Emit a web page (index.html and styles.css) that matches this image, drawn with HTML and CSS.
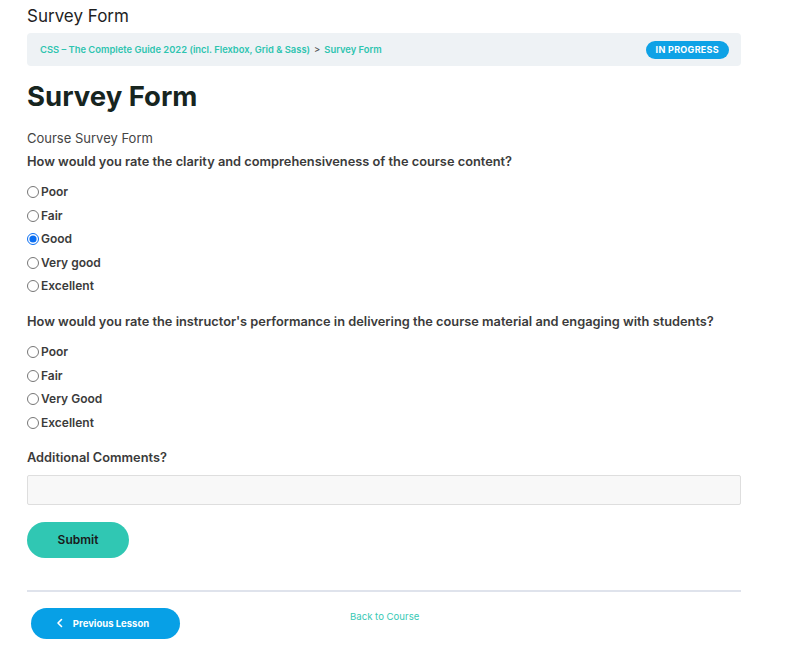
FILE: index.html
```html
<!DOCTYPE html>
<html>
<head>
<meta charset="utf-8">
<link rel="stylesheet" href="styles.css">
</head>
<body>
<div class="page">
  <div class="top-title">Survey Form</div>
  <div class="crumbs">
    <div class="crumb-links"><a class="crumb">CSS – The Complete Guide 2022 (incl. Flexbox, Grid &amp; Sass)</a><span class="sep">&gt;</span><a class="crumb">Survey Form</a></div>
    <span class="badge">IN PROGRESS</span>
  </div>
  <h1 class="title">Survey Form</h1>
  <form class="form">
    <div class="form-name">Course Survey Form</div>
    <div class="question">How would you rate the clarity and comprehensiveness of the course content?</div>
    <div class="options">
      <label class="opt"><input type="radio" name="q1"><span>Poor</span></label>
      <label class="opt"><input type="radio" name="q1"><span>Fair</span></label>
      <label class="opt"><input type="radio" name="q1" checked><span>Good</span></label>
      <label class="opt"><input type="radio" name="q1"><span>Very good</span></label>
      <label class="opt"><input type="radio" name="q1"><span>Excellent</span></label>
    </div>
    <div class="question">How would you rate the instructor's performance in delivering the course material and engaging with students?</div>
    <div class="options last">
      <label class="opt"><input type="radio" name="q2"><span>Poor</span></label>
      <label class="opt"><input type="radio" name="q2"><span>Fair</span></label>
      <label class="opt"><input type="radio" name="q2"><span>Very Good</span></label>
      <label class="opt"><input type="radio" name="q2"><span>Excellent</span></label>
    </div>
    <div class="question comments-label">Additional Comments?</div>
    <textarea class="comments"></textarea>
    <button type="button" class="submit">Submit</button>
  </form>
  <hr class="divider">
  <div class="nav">
    <button type="button" class="prev"><svg width="8" height="10" viewBox="0 0 8 10"><path d="M5.5 1.5 L2 5 L5.5 8.5" fill="none" stroke="#fff" stroke-width="1.6" stroke-linecap="round" stroke-linejoin="round"/></svg><span>Previous Lesson</span></button>
    <a class="back">Back to Course</a>
  </div>
</div>
</body>
</html>
```
FILE: styles.css
```css
* { box-sizing: border-box; }
body {
  margin: 0;
  font-family: Inter, "Noto Sans", sans-serif;
  background: #fff;
  color: #333;
}
.page {
  width: 714px;
  margin-left: 27px;
  padding-top: 5px;
}
.top-title {
  font-size: 17px;
  line-height: 22px;
  color: #1f1f1f;
}
.crumbs {
  margin-top: 6px;
  height: 33px;
  background: #eef2f5;
  border-radius: 4px;
  display: flex;
  align-items: center;
  justify-content: space-between;
  padding: 0 12px 0 13px;
}
.crumb-links {
  font-size: 9.4px;
  font-weight: 600;
  color: #2ec4b0;
}
.crumb { color: #2ec4b0; }
.sep { color: #555; margin: 0 4px; font-weight: 500; }
.badge {
  background: #0ea2e6;
  color: #fff;
  font-size: 9px;
  font-weight: 700;
  letter-spacing: 0.3px;
  border-radius: 9px;
  padding: 0 10px;
  height: 18px;
  line-height: 18px;
}
.title {
  margin: 13px 0 0;
  font-size: 27.5px;
  line-height: 34px;
  font-weight: 700;
  color: #17251f;
}
.form {
  margin-top: 16px;
}
.form-name {
  font-size: 13px;
  line-height: 18px;
  color: #444;
}
.question {
  margin-top: 6px;
  font-size: 12.8px;
  line-height: 18px;
  font-weight: 600;
  color: #3b3b3b;
}
.options {
  display: flex;
  flex-direction: column;
  gap: 5.5px;
  margin-top: 12px;
  margin-bottom: 18px;
}
.options.last { margin-bottom: 17px; }
.opt {
  display: flex;
  align-items: center;
  font-size: 12px;
  font-weight: 600;
  color: #3b3b3b;
  line-height: 18px;
}
.opt input {
  margin: 0 2px 0 0;
  width: 12px;
  height: 12px;
  accent-color: #0a6ef2;
}
.comments-label { margin-top: 6px; }
.comments {
  display: block;
  margin-top: 8px;
  width: 714px;
  height: 30px;
  background: #f8f8f8;
  border: 1px solid #dedede;
  border-radius: 2px;
  resize: none;
}
.submit {
  display: block;
  margin-top: 17px;
  width: 102px;
  height: 36px;
  border: none;
  border-radius: 18px;
  background: #30c7b3;
  color: #1a1a1a;
  font-family: inherit;
  font-size: 12px;
  font-weight: 600;
}
.divider {
  margin: 32px 0 0;
  border: none;
  height: 2px;
  background: #dfe3ec;
}
.nav {
  display: flex;
  align-items: flex-start;
  margin-top: 16px;
  padding-left: 4px;
}
.prev {
  display: flex;
  align-items: center;
  justify-content: center;
  gap: 9px;
  width: 149px;
  height: 31px;
  border: none;
  border-radius: 16px;
  background: #07a0e6;
  color: #fff;
  font-family: inherit;
  font-size: 9.5px;
  font-weight: 700;
  padding-right: 12px;
}
.back {
  margin-left: 170px;
  margin-top: 3px;
  font-size: 9.6px;
  color: #38c9b5;
}
```
